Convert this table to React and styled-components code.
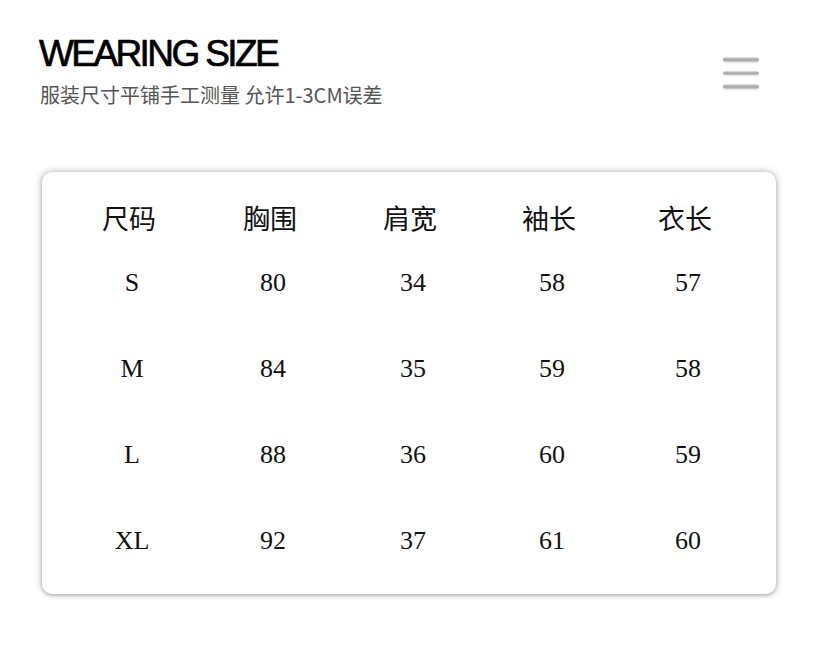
import React from "react";
import styled, { createGlobalStyle } from "styled-components";

const GlobalStyle = createGlobalStyle`
  html, body {
    margin: 0;
    padding: 0;
    background: #ffffff;
  }
`;

const Page = styled.div`
  width: 820px;
  height: 661px;
  box-sizing: border-box;
  padding: 36px 61px 0 42px;
  display: flex;
  flex-direction: column;
`;

const Header = styled.header`
  display: flex;
  justify-content: space-between;
  align-items: flex-start;
`;

const TitleBlock = styled.div`
  display: flex;
  flex-direction: column;
  margin-left: -3px;
`;

const Title = styled.h1`
  margin: 0;
  font-family: "Liberation Sans", Arial, sans-serif;
  font-weight: 400;
  font-size: 37px;
  line-height: 36px;
  letter-spacing: -2.6px;
  color: #000;
  -webkit-text-stroke: 0.7px #000;
`;

const Subtitle = styled.p`
  margin: 10px 0 0 1px;
  font-family: "Noto Sans CJK SC", sans-serif;
  font-size: 20px;
  line-height: 26px;
  color: #555;
`;

const Menu = styled.div`
  display: flex;
  flex-direction: column;
  gap: 9px;
  margin-top: 21px;
`;

const MenuBar = styled.span`
  display: block;
  width: 36px;
  height: 4.5px;
  border-radius: 3px;
  background: linear-gradient(#e6e6e6, #a0a0a0 55%, #cfcfcf);
  box-shadow: 0 1px 2px rgba(0, 0, 0, 0.12);
`;

const Card = styled.div`
  margin-top: 64px;
  width: 734px;
  box-sizing: border-box;
  padding: 22px 16px 10px 19px;
  background: #fff;
  border-radius: 10px;
  box-shadow: 0 0 7px rgba(0, 0, 0, 0.35), 0 2px 3px rgba(0, 0, 0, 0.12);
`;

const Row = styled.div`
  display: grid;
  grid-template-columns: 142px 140px 140px 138px 134px;
  height: ${({ head }) => (head ? "46px" : "86px")};
  margin-left: ${({ head }) => (head ? "-3px" : "0")};
  align-items: center;
`;

const Cell = styled.div`
  text-align: center;
  font-family: "Liberation Serif", "Noto Sans CJK SC", serif;
  font-size: ${({ head }) => (head ? "27px" : "26px")};
  font-weight: 400;
  color: #111;
`;

const headers = ["尺码", "胸围", "肩宽", "袖长", "衣长"];

const rows = [
  ["S", 80, 34, 58, 57],
  ["M", 84, 35, 59, 58],
  ["L", 88, 36, 60, 59],
  ["XL", 92, 37, 61, 60],
];

const App = () => (
  <>
    <GlobalStyle />
    <Page>
      <Header>
        <TitleBlock>
          <Title>WEARING SIZE</Title>
          <Subtitle>服装尺寸平铺手工测量 允许1-3CM误差</Subtitle>
        </TitleBlock>
        <Menu>
          <MenuBar />
          <MenuBar />
          <MenuBar />
        </Menu>
      </Header>
      <Card>
        <Row head>
          {headers.map((h) => (
            <Cell head key={h}>
              {h}
            </Cell>
          ))}
        </Row>
        {rows.map((r) => (
          <Row key={r[0]}>
            {r.map((v, i) => (
              <Cell key={i}>{v}</Cell>
            ))}
          </Row>
        ))}
      </Card>
    </Page>
  </>
);

export default App;
